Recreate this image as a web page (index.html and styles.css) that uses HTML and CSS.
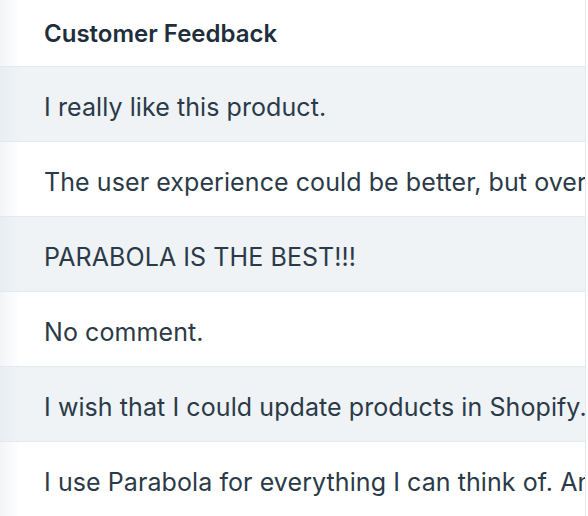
FILE: index.html
```html
<!DOCTYPE html>
<html>
<head>
<meta charset="utf-8">
<link rel="stylesheet" href="styles.css">
</head>
<body>
<div class="table">
  <div class="fade"></div>
  <div class="head">Customer Feedback</div>
  <div class="row shaded">I really like this product.</div>
  <div class="row">The user experience could be better, but overall I am happy with it.</div>
  <div class="row shaded">PARABOLA IS THE BEST!!!</div>
  <div class="row">No comment.</div>
  <div class="row shaded">I wish that I could update products in Shopify.</div>
  <div class="row">I use Parabola for everything I can think of. And more.</div>
</div>
</body>
</html>
```
FILE: styles.css
```css
html, body {
  margin: 0;
  padding: 0;
  background: #ffffff;
}
body {
  width: 588px;
  height: 516px;
  overflow: hidden;
  font-family: Inter, "Noto Sans", sans-serif;
}
.table {
  position: relative;
  width: 585px;
  border-right: 1px solid #e3e9ef;
  display: flex;
  flex-direction: column;
}
.fade {
  position: absolute;
  left: 0;
  top: 0;
  bottom: 0;
  width: 20px;
  background: linear-gradient(to right, rgba(226, 231, 237, 0.45), rgba(226, 231, 237, 0));
  pointer-events: none;
  z-index: 2;
}
.head {
  height: 67px;
  display: flex;
  align-items: center;
  padding-left: 44px;
  font-size: 24px;
  font-weight: 600;
  color: #1f2e3c;
  box-sizing: border-box;
  border-bottom: 1px solid #e3e9ef;
}
.row {
  height: 75px;
  display: flex;
  align-items: center;
  padding-left: 44px;
  padding-top: 5px;
  font-size: 25px;
  font-weight: 400;
  letter-spacing: 0.08px;
  color: #2b3a48;
  white-space: nowrap;
  overflow: hidden;
  box-sizing: border-box;
  border-bottom: 1px solid #e3e9ef;
}
.shaded {
  background: #eff3f6;
}
```
